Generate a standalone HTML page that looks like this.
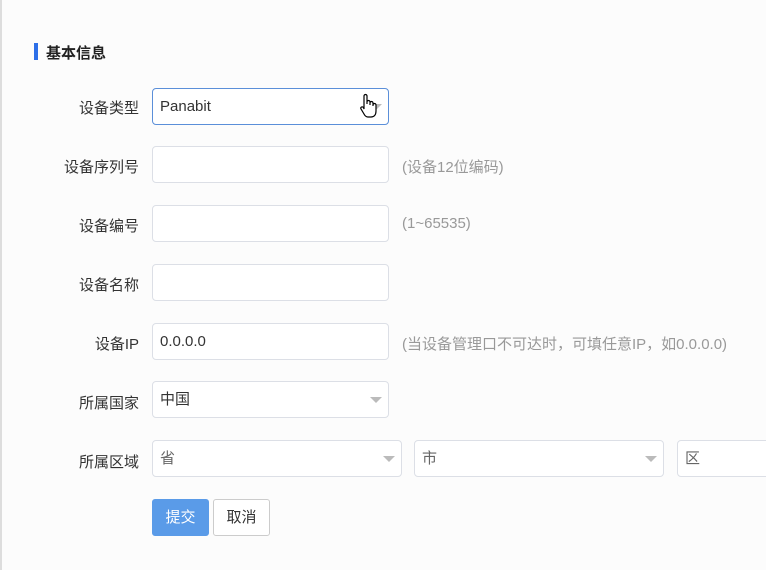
<!DOCTYPE html>
<html><head><meta charset="utf-8"><style>
body{margin:0;width:766px;height:570px;background:#fcfcfc;font-family:"Liberation Sans","Noto Sans CJK SC",sans-serif;font-size:15px;color:#333;position:relative;overflow:hidden}
.lb{position:absolute;left:0;width:1.5px;top:0;height:570px;background:#ddd}
.t{position:absolute;left:34px;top:42px;font-weight:bold;font-size:15px;color:#222}
.t:before{content:"";position:absolute;left:0;top:1px;width:4px;height:17px;background:#2d6fe8}
.t span{margin-left:12px}
.l{position:absolute;right:627px;text-align:right;white-space:nowrap}
.i{position:absolute;left:152px;border:1px solid #dcdfe6;border-radius:4px;background:#fff;box-sizing:border-box;width:237px;height:37px;padding-left:7px;line-height:36px}
.h{position:absolute;left:402px;color:#999}
.ar{position:absolute;right:6px;top:15px;width:0;height:0;border-left:6px solid transparent;border-right:6px solid transparent;border-top:6px solid #bbb}
.g{color:#666}
.btn{position:absolute;top:499px;height:37px;box-sizing:border-box;border-radius:3px;line-height:35px;text-align:center}
</style></head><body>
<div class="lb"></div>
<div class="t"><span>基本信息</span></div>
<div class="l" style="top:97px">设备类型</div>
<div class="i" style="top:88px;border-color:#5b8fd9">Panabit<div class="ar"></div>
<svg style="position:absolute;left:205px;top:4px" width="22" height="26" viewBox="0 0 22 26"><path d="M6 14V3a1.5 1.5 0 0 1 3 0v8V9a1.5 1.5 0 0 1 3 0v3V10a1.5 1.5 0 0 1 3 0v3V12a1.5 1.5 0 0 1 3 0v6c0 4-2 6-5 6h-3c-2 0-3-1-4-3l-3-5c-1-1.5 1-3 2.5-1.5L6 16z" fill="#fff" stroke="#000" stroke-width="1.2"/></svg></div>
<div class="l" style="top:156px">设备序列号</div>
<div class="i" style="top:146px"></div><div class="h" style="top:156px">(设备12位编码)</div>
<div class="l" style="top:215px">设备编号</div>
<div class="i" style="top:205px"></div><div class="h" style="top:215px">(1~65535)</div>
<div class="l" style="top:274px">设备名称</div>
<div class="i" style="top:264px"></div>
<div class="l" style="top:333px">设备IP</div>
<div class="i" style="top:323px">0.0.0.0</div><div class="h" style="top:333px">(当设备管理口不可达时，可填任意IP，如0.0.0.0)</div>
<div class="l" style="top:392px">所属国家</div>
<div class="i" style="top:381px">中国<div class="ar"></div></div>
<div class="l" style="top:451px">所属区域</div>
<div class="i g" style="top:440px;width:250px">省<div class="ar"></div></div>
<div class="i g" style="top:440px;left:414px;width:250px">市<div class="ar"></div></div>
<div class="i g" style="top:440px;left:677px;width:120px">区</div>
<div class="btn" style="left:152px;width:57px;background:#5a9be8;color:#fff;border:1px solid #5a9be8">提交</div>
<div class="btn" style="left:213px;width:57px;background:#fff;border:1px solid #ccc">取消</div>
</body></html>
